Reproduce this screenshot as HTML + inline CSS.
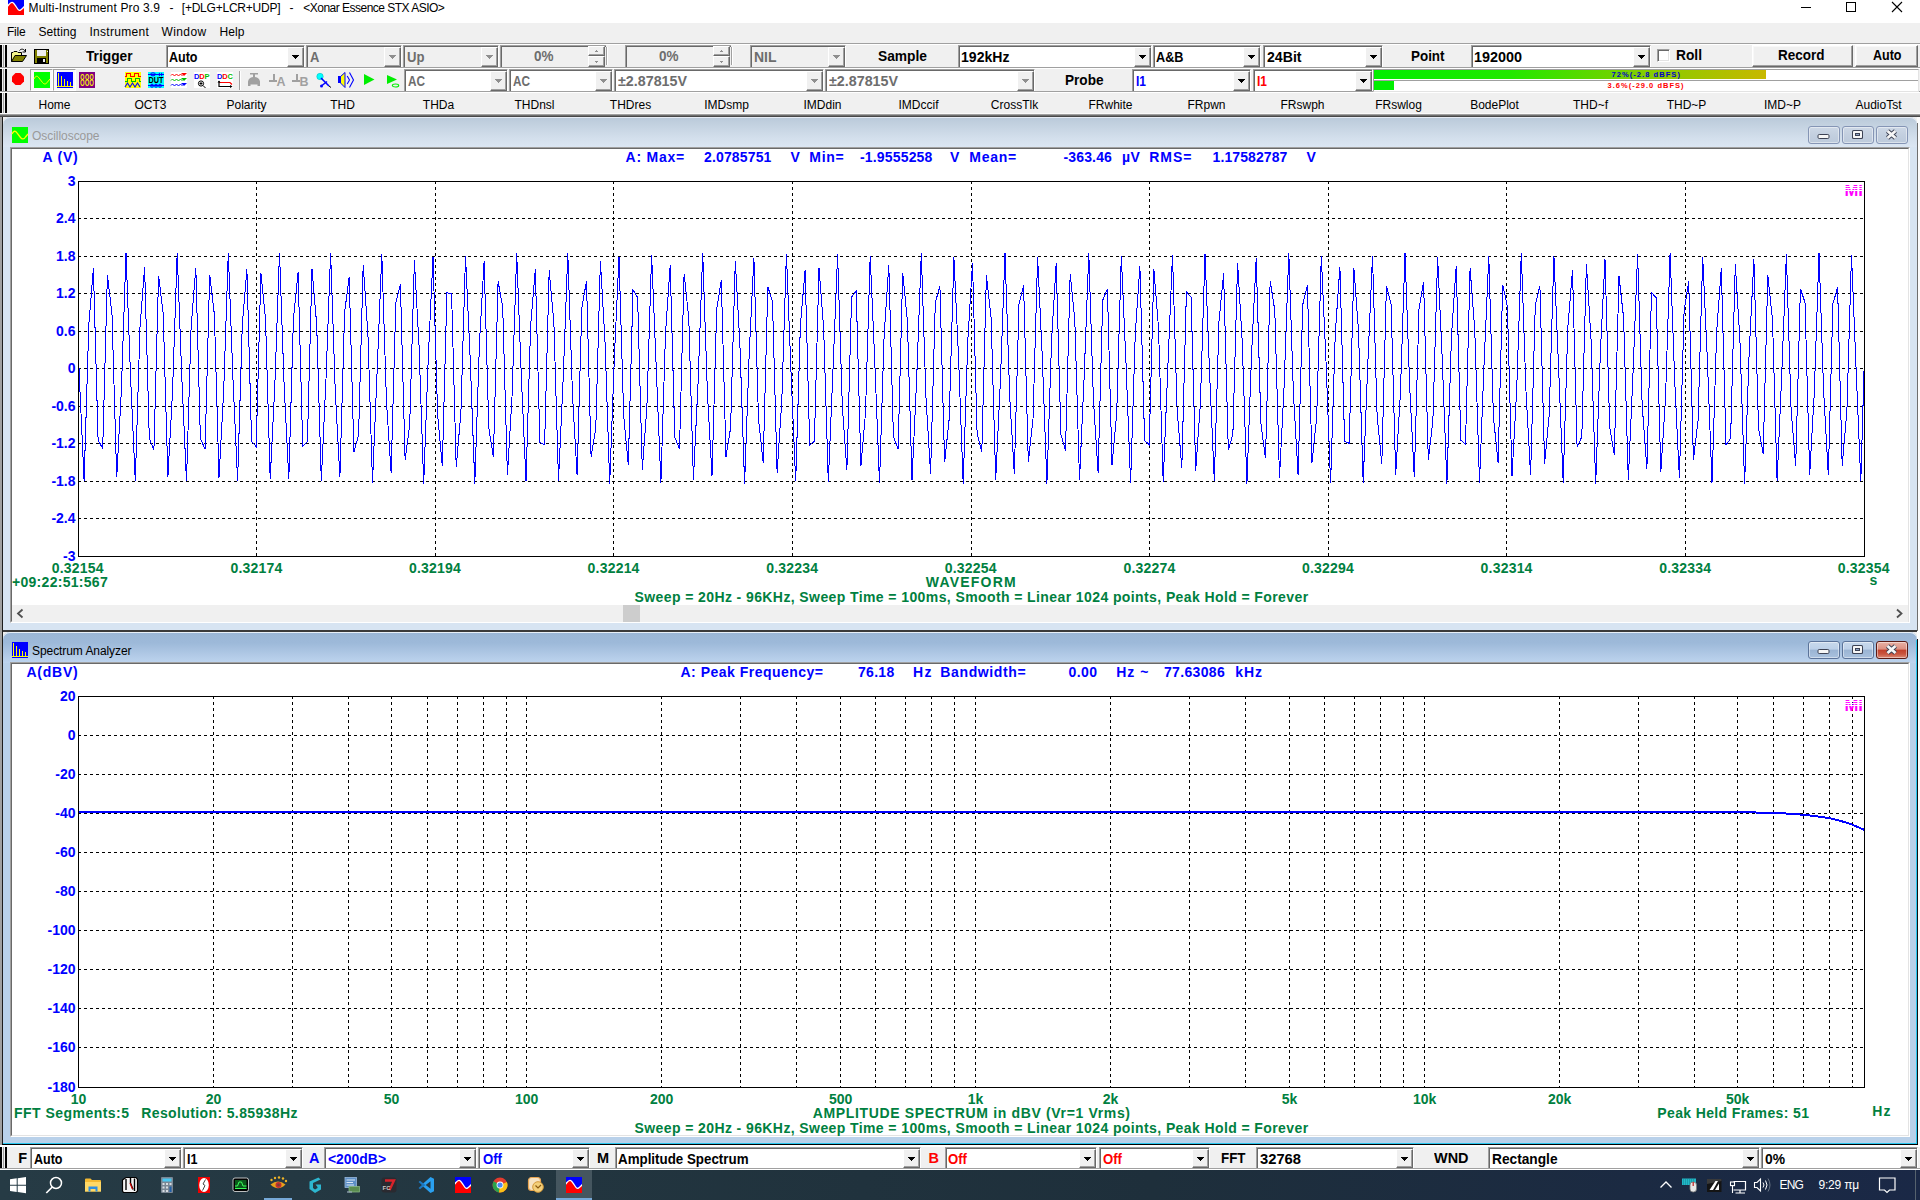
<!DOCTYPE html>
<html lang="en"><head><meta charset="utf-8"><title>Multi-Instrument Pro 3.9</title>
<style>
html,body{margin:0;padding:0;}
body{width:1920px;height:1200px;position:relative;overflow:hidden;background:#f0f0f0;font-family:"Liberation Sans",sans-serif;}
.a{position:absolute;box-sizing:border-box;}
.t{position:absolute;white-space:pre;}
svg{position:absolute;overflow:visible;}
.cb{position:absolute;box-sizing:border-box;border:solid;border-width:1px 1px 0 1px;border-color:#a0a0a0 #fff #fff #a0a0a0;}
.cb>i{position:absolute;box-sizing:border-box;left:0;top:0;right:0;bottom:0;border:solid #696969;border-width:1px 0 0 1px;display:block;}
.ab{position:absolute;box-sizing:border-box;background:#f0f0f0;border:1px solid;border-color:#fff #696969 #696969 #fff;box-shadow:inset -1px -1px 0 #a0a0a0;}
.ab>b{position:absolute;left:4px;top:7px;width:7px;height:4px;--c:#000;background:linear-gradient(var(--c),var(--c)) 0 0/7px 1px no-repeat,linear-gradient(var(--c),var(--c)) 1px 1px/5px 1px no-repeat,linear-gradient(var(--c),var(--c)) 2px 2px/3px 1px no-repeat,linear-gradient(var(--c),var(--c)) 3px 3px/1px 1px no-repeat;}
.ab.d>b{--c:#8f8f8f;}
.ab>u{position:absolute;left:6px;width:3px;height:2px;--c:#8f8f8f;}
.ab>u.up{top:3px;background:linear-gradient(var(--c),var(--c)) 1px 0/1px 1px no-repeat,linear-gradient(var(--c),var(--c)) 0 1px/3px 1px no-repeat;}
.ab>u.dn{top:4px;background:linear-gradient(var(--c),var(--c)) 0 0/3px 1px no-repeat,linear-gradient(var(--c),var(--c)) 1px 1px/1px 1px no-repeat;}
.btn{position:absolute;box-sizing:border-box;background:#f0f0f0;border:1px solid;border-color:#fff #696969 #696969 #fff;box-shadow:inset -1px -1px 0 #a0a0a0, inset 1px 1px 0 #f8f8f8;}
.grip{position:absolute;width:7px;background:linear-gradient(90deg,#000 0,#000 2px,#f0f0f0 2px,#f0f0f0 3px,#a0a0a0 3px,#a0a0a0 4px,#f0f0f0 4px,#f0f0f0 5px,#000 5px,#000 7px);}
.hl{position:absolute;left:0;width:1920px;height:2px;background:linear-gradient(180deg,#a0a0a0 0,#a0a0a0 1px,#fff 1px,#fff 2px);}
</style></head><body>
<div class="a" style="left:0px;top:0px;width:1920px;height:23px;background:#fff;"></div><svg style="left:8px;top:-1px;overflow:hidden" width="16" height="16" viewBox="0 0 16 16" shape-rendering="crispEdges"><rect width="16" height="16" fill="#0000ff"/><path d="M-1 8 L0.500 6 C2 4.200 3 3.300 4 3.300 C5.500 3.300 6.500 5 8 7.500 C9.500 10 10.500 11.400 11.500 11.400 C13 11.400 14.500 9.500 17 7 V17 H-1Z" fill="#ff0000" stroke="#fff" stroke-width="1.300" shape-rendering="auto"/><rect x="0" y="15" width="16" height="1" fill="#ff0000"/></svg><span class="t " style="left:28.60px;top:1.84px;font-size:12px;line-height:12px;color:#000;letter-spacing:0.144px;">Multi-Instrument Pro 3.9</span><span class="t " style="left:169.50px;top:1.84px;font-size:12px;line-height:12px;color:#000;">-</span><span class="t " style="left:181.80px;top:1.84px;font-size:12px;line-height:12px;color:#000;letter-spacing:-0.229px;">[+DLG+LCR+UDP]</span><span class="t " style="left:289.50px;top:1.84px;font-size:12px;line-height:12px;color:#000;">-</span><span class="t " style="left:303.30px;top:1.84px;font-size:12px;line-height:12px;color:#000;letter-spacing:-0.517px;">&lt;Xonar Essence STX ASIO&gt;</span><svg style="left:1790px;top:0" width="130" height="22" viewBox="0 0 130 22" shape-rendering="crispEdges"><rect x="11" y="7" width="10" height="1" fill="#000"/><rect x="56.5" y="2.5" width="9" height="9" fill="none" stroke="#000" stroke-width="1"/><path d="M102 2 L112 12 M112 2 L102 12" stroke="#000" stroke-width="1.1" shape-rendering="auto"/></svg><div class="a" style="left:0px;top:23px;width:1920px;height:20px;background:#f0f0f0;"></div><span class="t " style="left:7.00px;top:25.84px;font-size:12px;line-height:12px;color:#000;letter-spacing:-0.209px;">File</span><span class="t " style="left:38.50px;top:25.84px;font-size:12px;line-height:12px;color:#000;letter-spacing:0.092px;">Setting</span><span class="t " style="left:89.50px;top:25.84px;font-size:12px;line-height:12px;color:#000;letter-spacing:0.281px;">Instrument</span><span class="t " style="left:161.50px;top:25.84px;font-size:12px;line-height:12px;color:#000;letter-spacing:0.387px;">Window</span><span class="t " style="left:219.50px;top:25.84px;font-size:12px;line-height:12px;color:#000;letter-spacing:0.080px;">Help</span><div class="hl" style="top:43px"></div><div class="hl" style="top:67px"></div><div class="hl" style="top:91px"></div><div class="grip" style="left:0;top:45px;height:22px"></div><div class="grip" style="left:0;top:69px;height:22px"></div><div class="grip" style="left:0;top:93px;height:21px"></div><svg style="left:11px;top:48px" width="16" height="16" viewBox="0 0 16 16"><path d="M8.5 2.5 C10 0.5 13 0.8 14 3.2 M14.5 1 V4 H11.5" fill="none" stroke="#000" stroke-width="1"/><path d="M0.5 13.5 V4.5 H2 L3 3.5 H6 L7 4.5 H10.5 V7.5" fill="#f4f48a" stroke="#000" stroke-width="1"/><path d="M0.5 13.5 L4 7.5 H15.5 L11.5 13.5 Z" fill="#808000" stroke="#000" stroke-width="1"/></svg><svg style="left:34px;top:49px" width="15" height="15" viewBox="0 0 15 15" shape-rendering="crispEdges"><rect x="0.5" y="0.5" width="14" height="14" fill="#808000" stroke="#000"/><rect x="3" y="1" width="9" height="6" fill="#f0f0f0"/><rect x="3" y="9" width="9" height="5" fill="#000"/><rect x="9" y="10" width="2" height="3" fill="#f0f0f0"/><rect x="12.5" y="1.5" width="1" height="1" fill="#f0f0f0"/></svg><span class="t " style="left:86.00px;top:49.15px;font-size:14px;line-height:14px;color:#000;transform:scaleX(0.9799);transform-origin:0 0;font-weight:bold;">Trigger</span><div class="cb" style="left:166px;top:45px;width:139px;height:22px;background:#fff;"><i></i><div class="ab" style="right:0;top:1px;width:17px;height:20px;"><b></b></div></div><span class="t " style="left:169.30px;top:50.15px;font-size:14px;line-height:14px;color:#000;transform:scaleX(0.8941);transform-origin:0 0;font-weight:bold;">Auto</span><div class="cb" style="left:306px;top:45px;width:96px;height:22px;background:#f0f0f0;"><i></i><div class="ab d" style="right:0;top:1px;width:17px;height:20px;"><b></b></div></div><span class="t " style="left:310.00px;top:50.15px;font-size:14px;line-height:14px;color:#6d6d6d;transform:scaleX(0.9286);transform-origin:0 0;font-weight:bold;">A</span><div class="cb" style="left:403px;top:45px;width:96px;height:22px;background:#f0f0f0;"><i></i><div class="ab d" style="right:0;top:1px;width:17px;height:20px;"><b></b></div></div><span class="t " style="left:407.00px;top:50.15px;font-size:14px;line-height:14px;color:#6d6d6d;transform:scaleX(0.9378);transform-origin:0 0;font-weight:bold;">Up</span><div class="cb" style="left:500px;top:45px;width:106px;height:22px;background:#f0f0f0;border-right:none"><i></i><div class="ab d" style="right:1px;top:0;width:17px;height:10px;"><u class="up"></u></div><div class="ab d" style="right:1px;top:10px;width:17px;height:11px;"><u class="dn"></u></div></div><span class="t " style="left:534.30px;top:48.65px;font-size:14px;line-height:14px;color:#6d6d6d;transform:scaleX(0.9637);transform-origin:0 0;font-weight:bold;">0%</span><div class="cb" style="left:625px;top:45px;width:106px;height:22px;background:#f0f0f0;border-right:none"><i></i><div class="ab d" style="right:1px;top:0;width:17px;height:10px;"><u class="up"></u></div><div class="ab d" style="right:1px;top:10px;width:17px;height:11px;"><u class="dn"></u></div></div><span class="t " style="left:659.00px;top:48.65px;font-size:14px;line-height:14px;color:#6d6d6d;transform:scaleX(0.9637);transform-origin:0 0;font-weight:bold;">0%</span><div class="a" style="left:606px;top:47px;width:2px;height:18px;background:linear-gradient(90deg,#a0a0a0 0,#a0a0a0 1px,#fff 1px);"></div><div class="a" style="left:731px;top:47px;width:2px;height:18px;background:linear-gradient(90deg,#a0a0a0 0,#a0a0a0 1px,#fff 1px);"></div><div class="cb" style="left:750px;top:45px;width:96px;height:22px;background:#f0f0f0;"><i></i><div class="ab d" style="right:0;top:1px;width:17px;height:20px;"><b></b></div></div><span class="t " style="left:754.00px;top:50.15px;font-size:14px;line-height:14px;color:#6d6d6d;transform:scaleX(0.9977);transform-origin:0 0;font-weight:bold;">NIL</span><span class="t " style="left:878.00px;top:49.15px;font-size:14px;line-height:14px;color:#000;transform:scaleX(0.9840);transform-origin:0 0;font-weight:bold;">Sample</span><div class="cb" style="left:958px;top:45px;width:194px;height:22px;background:#fff;"><i></i><div class="ab" style="right:0;top:1px;width:17px;height:20px;"><b></b></div></div><span class="t " style="left:961.00px;top:50.15px;font-size:14px;line-height:14px;color:#000;transform:scaleX(1.0051);transform-origin:0 0;font-weight:bold;">192kHz</span><div class="cb" style="left:1153px;top:45px;width:108px;height:22px;background:#fff;"><i></i><div class="ab" style="right:0;top:1px;width:17px;height:20px;"><b></b></div></div><span class="t " style="left:1156.30px;top:50.15px;font-size:14px;line-height:14px;color:#000;transform:scaleX(0.9066);transform-origin:0 0;font-weight:bold;">A&amp;B</span><div class="cb" style="left:1263px;top:45px;width:120px;height:22px;background:#fff;"><i></i><div class="ab" style="right:0;top:1px;width:17px;height:20px;"><b></b></div></div><span class="t " style="left:1267.00px;top:50.15px;font-size:14px;line-height:14px;color:#000;transform:scaleX(1.0078);transform-origin:0 0;font-weight:bold;">24Bit</span><span class="t " style="left:1411.00px;top:49.15px;font-size:14px;line-height:14px;color:#000;transform:scaleX(0.9574);transform-origin:0 0;font-weight:bold;">Point</span><div class="cb" style="left:1471px;top:45px;width:180px;height:22px;background:#fff;"><i></i><div class="ab" style="right:0;top:1px;width:17px;height:20px;"><b></b></div></div><span class="t " style="left:1474.30px;top:50.15px;font-size:14px;line-height:14px;color:#000;transform:scaleX(1.0276);transform-origin:0 0;font-weight:bold;">192000</span><div class="a" style="left:1657px;top:49px;width:13px;height:13px;background:#fff;border:1px solid;border-color:#a0a0a0 #fff #fff #a0a0a0;box-shadow:inset 1px 1px 0 #696969, inset -1px -1px 0 #e3e3e3;"></div><span class="t " style="left:1676.00px;top:48.15px;font-size:14px;line-height:14px;color:#000;transform:scaleX(0.9833);transform-origin:0 0;font-weight:bold;">Roll</span><div class="btn" style="left:1752px;top:45px;width:101px;height:22px"></div><span class="t " style="left:1778.30px;top:48.15px;font-size:14px;line-height:14px;color:#000;transform:scaleX(0.9641);transform-origin:0 0;font-weight:bold;">Record</span><div class="btn" style="left:1855px;top:45px;width:63px;height:22px"></div><span class="t " style="left:1873.30px;top:48.15px;font-size:14px;line-height:14px;color:#000;transform:scaleX(0.8941);transform-origin:0 0;font-weight:bold;">Auto</span><svg style="left:12px;top:73px" width="12" height="12" viewBox="0 0 12 12"><path d="M3.5 0 H8.5 L12 3.5 V8.5 L8.5 12 H3.5 L0 8.5 V3.5Z" fill="#ff0000"/></svg><div class="a" style="left:30px;top:69px;width:23px;height:22px;background:#f8f8f8;border:1px solid;border-color:#a0a0a0 #fff #fff #a0a0a0;"></div><div class="a" style="left:53px;top:69px;width:23px;height:22px;background:#f8f8f8;border:1px solid;border-color:#a0a0a0 #fff #fff #a0a0a0;"></div><svg style="left:34px;top:72px" width="16" height="16" viewBox="0 0 16 16"><rect width="16" height="16" fill="#00ff00"/><path d="M0 7 C1.5 3.5 3.5 3.5 5 6 L8.5 10.5 C10 12.5 12 12.5 13.5 10 L16 7" fill="none" stroke="#ffff00" stroke-width="1"/></svg><svg style="left:57px;top:72px" width="16" height="16" viewBox="0 0 16 16" shape-rendering="crispEdges"><rect width="16" height="16" fill="#0000ff"/><g fill="#ffff00"><rect x="0" y="14" width="16" height="1"/><rect x="1" y="1" width="1" height="13"/><rect x="4" y="4" width="1" height="10"/><rect x="7" y="7" width="1" height="7"/><rect x="10" y="9" width="1" height="5"/><rect x="13" y="10" width="1" height="4"/></g></svg><svg style="left:79px;top:72px" width="16" height="16" viewBox="0 0 16 16"><rect width="16" height="16" fill="#800080"/><text x="1" y="14" font-family="Liberation Sans,sans-serif" font-size="16.500" fill="#ffff00" textLength="14" lengthAdjust="spacingAndGlyphs">888</text></svg><svg style="left:125px;top:72px" width="16" height="16" viewBox="0 0 16 16"><rect width="16" height="16" fill="#ffff00"/><path d="M0 4.5 H1.5 V1.5 H5.5 V4.5 H9.5 V1.5 H13.5 V4.5 H16" fill="none" stroke="#ff0000" stroke-width="1" shape-rendering="crispEdges"/><path d="M0 9.5 H2.5 V6.5 H6.5 V9.5 H10.5 V6.5 H14.5 V9.5 H16" fill="none" stroke="#00c000" stroke-width="1" shape-rendering="crispEdges"/><path d="M0 15 L2.5 11 L5 15 L7.5 11 L10 15 L12.5 11 L15 15" fill="none" stroke="#0000ff" stroke-width="1.1"/></svg><svg style="left:148px;top:72px" width="16" height="16" viewBox="0 0 16 16"><rect width="16" height="16" fill="#00ffff"/><path d="M0 2.5 H16 M0 13.5 H16" stroke="#0000ff" stroke-width="1"/><ellipse cx="5" cy="2.3" rx="2.4" ry="1.5" fill="none" stroke="#0000ff"/><path d="M10 2.5 l2 -2 v4z M15 2.5 l-2 -2 v4z" fill="#0000ff"/><circle cx="4" cy="13.7" r="1.5" fill="none" stroke="#0000ff"/><circle cx="8" cy="13.7" r="1.5" fill="none" stroke="#0000ff"/><circle cx="12" cy="13.7" r="1.5" fill="none" stroke="#0000ff"/><text x="8" y="11" font-family="Liberation Sans,sans-serif" font-weight="bold" font-size="8.5" fill="#000" text-anchor="middle" textLength="15" lengthAdjust="spacingAndGlyphs">DUT</text></svg><svg style="left:171px;top:72px" width="16" height="16" viewBox="0 0 16 16"><rect width="16" height="16" fill="#fff"/><g fill="none" stroke-width="1"><path d="M0 3.5 l1.5 -1.5 l2 2 l2 -2 l2 2 l2 -2 l2 2" stroke="#ff0000"/><path d="M0 8.5 l1.5 -1.5 l2 2 l2 -2 l2 2 l2 -2 l2 2" stroke="#00c000"/><path d="M0 13.5 l1.5 -1.5 l2 2 l2 -2 l2 2 l2 -2 l2 2" stroke="#0000ff"/></g><path d="M10 1 h6 l-3 3z" fill="#ff0000"/><path d="M10 6 h6 l-3 3z" fill="#00c000"/><path d="M10 11 h6 l-3 3z" fill="#0000ff"/></svg><svg style="left:194px;top:72px" width="16" height="16" viewBox="0 0 16 16"><rect width="16" height="16" fill="#fff"/><g font-family="Liberation Sans,sans-serif" font-weight="bold" font-size="7.5"><text x="0" y="7" fill="#0000ff">D</text><text x="5.3" y="7" fill="#ff0000">D</text><text x="10.6" y="7" fill="#00c000">P</text></g><circle cx="7" cy="11.5" r="2.6" fill="none" stroke="#000"/><path d="M5.5 11.5 h3 M7 10 v3 M9 13.5 l2.5 2.5" stroke="#000" fill="none"/></svg><svg style="left:217px;top:72px" width="16" height="16" viewBox="0 0 16 16"><rect width="16" height="16" fill="#fff"/><g font-family="Liberation Sans,sans-serif" font-weight="bold" font-size="7.5"><text x="0" y="7" fill="#0000ff">D</text><text x="5.3" y="7" fill="#ff0000">D</text><text x="10.6" y="7" fill="#00c000">C</text></g><path d="M2 10.5 H13 L15 12.5" fill="none" stroke="#ff0000" stroke-width="1.2"/><path d="M2 9 V14.5 H14" fill="none" stroke="#000" stroke-width="1.2"/><path d="M0.5 10.5 l1.5 -2 l1.5 2z M13 13 l2.5 1.5 l-2.5 1.5z" fill="#000"/></svg><div class="a" style="left:239px;top:71px;width:2px;height:19px;background:linear-gradient(90deg,#a0a0a0 0,#a0a0a0 1px,#fff 1px);"></div><svg style="left:247px;top:72px" width="14" height="16" viewBox="0 0 14 16"><path d="M3 1 h8 v1.5 h-3 v2.5 c3 0.5 4.5 2 5 4.5 v4.5 h-2.5 v-1.5 h-7 v1.5 h-2.5 v-4.5 c0.5 -2.500 2 -4 5 -4.5 v-2.5 h-3z" fill="#a0a0a0"/></svg><svg style="left:269px;top:72px" width="17" height="16" viewBox="0 0 17 16"><path d="M4.500 1.500 V9 M0 9 H8" stroke="#a0a0a0" stroke-width="2" fill="none" shape-rendering="crispEdges"/><text x="7.500" y="14" font-family="Liberation Sans,sans-serif" font-size="13" font-weight="bold" fill="#a0a0a0" textLength="9" lengthAdjust="spacingAndGlyphs">A</text></svg><svg style="left:292px;top:72px" width="17" height="16" viewBox="0 0 17 16"><path d="M4.500 1.500 V9 M0 9 H8" stroke="#a0a0a0" stroke-width="2" fill="none" shape-rendering="crispEdges"/><text x="7.500" y="14" font-family="Liberation Sans,sans-serif" font-size="13" font-weight="bold" fill="#a0a0a0" textLength="9" lengthAdjust="spacingAndGlyphs">B</text></svg><svg style="left:316px;top:72px" width="16" height="16" viewBox="0 0 16 16"><circle cx="4" cy="4.500" r="3.2" fill="#00ffff" stroke="#00c0c0" stroke-width="0.6"/><path d="M5 6 L13 14 M11 9.500 L6 13.500" stroke="#0000ff" stroke-width="1.6" fill="none"/><circle cx="5.500" cy="14" r="1.500" fill="#0000ff"/><path d="M13 14 l2 1.500" stroke="#000" stroke-width="1"/></svg><svg style="left:338px;top:71px" width="17" height="18" viewBox="0 0 17 18"><path d="M2.500 5.500 L7 1.500 V16.500 L2.500 12Z" fill="#ffff00" stroke="#0000ff" stroke-width="1"/><rect x="0" y="5" width="2.800" height="7" fill="#0000ff"/><path d="M9.200 5 L11.500 9 L9.200 13 M11.500 1.500 L15.500 9 L11.500 16.500" fill="none" stroke="#0000ff" stroke-width="1.100"/></svg><svg style="left:364px;top:74px" width="11" height="11" viewBox="0 0 11 11"><path d="M0 0 L10.500 5.500 L0 11Z" fill="#00ee00"/></svg><svg style="left:387px;top:75px" width="14" height="14" viewBox="0 0 14 14"><path d="M0 0 L10 4.500 L0 9Z" fill="#00ee00"/><ellipse cx="8.500" cy="10.500" rx="3.200" ry="1.500" fill="none" stroke="#00ee00" stroke-width="1.100"/></svg><div class="cb" style="left:404px;top:69px;width:104px;height:22px;background:#fff;"><i></i><div class="ab d" style="right:0;top:1px;width:17px;height:20px;"><b></b></div></div><span class="t " style="left:408.00px;top:74.15px;font-size:14px;line-height:14px;color:#6d6d6d;transform:scaleX(0.8407);transform-origin:0 0;font-weight:bold;">AC</span><div class="cb" style="left:509px;top:69px;width:104px;height:22px;background:#fff;"><i></i><div class="ab d" style="right:0;top:1px;width:17px;height:20px;"><b></b></div></div><span class="t " style="left:513.00px;top:74.15px;font-size:14px;line-height:14px;color:#6d6d6d;transform:scaleX(0.8407);transform-origin:0 0;font-weight:bold;">AC</span><div class="cb" style="left:614px;top:69px;width:210px;height:22px;background:#fff;"><i></i><div class="ab d" style="right:0;top:1px;width:17px;height:20px;"><b></b></div></div><span class="t " style="left:618.00px;top:74.15px;font-size:14px;line-height:14px;color:#6d6d6d;transform:scaleX(1.0203);transform-origin:0 0;font-weight:bold;">±2.87815V</span><div class="cb" style="left:825px;top:69px;width:210px;height:22px;background:#fff;"><i></i><div class="ab d" style="right:0;top:1px;width:17px;height:20px;"><b></b></div></div><span class="t " style="left:829.00px;top:74.15px;font-size:14px;line-height:14px;color:#6d6d6d;transform:scaleX(1.0203);transform-origin:0 0;font-weight:bold;">±2.87815V</span><span class="t " style="left:1065.00px;top:73.15px;font-size:14px;line-height:14px;color:#000;transform:scaleX(0.9704);transform-origin:0 0;font-weight:bold;">Probe</span><div class="cb" style="left:1132px;top:69px;width:119px;height:22px;background:#fff;"><i></i><div class="ab" style="right:0;top:1px;width:17px;height:20px;"><b></b></div></div><span class="t " style="left:1136.00px;top:74.15px;font-size:14px;line-height:14px;color:#0000ff;transform:scaleX(0.8566);transform-origin:0 0;font-weight:bold;">I1</span><div class="cb" style="left:1253px;top:69px;width:120px;height:22px;background:#fff;"><i></i><div class="ab" style="right:0;top:1px;width:17px;height:20px;"><b></b></div></div><span class="t " style="left:1257.00px;top:74.15px;font-size:14px;line-height:14px;color:#ff0000;transform:scaleX(0.8566);transform-origin:0 0;font-weight:bold;">I1</span><div class="a" style="left:1373px;top:69px;width:546px;height:23px;background:#fff;border:1px solid;border-color:#a0a0a0 #e3e3e3 #e3e3e3 #a0a0a0;"></div><div class="a" style="left:1374px;top:70px;width:392px;height:9px;background:linear-gradient(90deg,#00ee00 0%,#22e800 35%,#7ad000 65%,#c8b800 100%);"></div><div class="a" style="left:1374px;top:80px;width:544px;height:1px;background:#a0a0a0;"></div><div class="a" style="left:1374px;top:81px;width:20px;height:9px;background:#00ee00;"></div><span class="t " style="left:1611.50px;top:71.25px;font-size:7.5px;line-height:7.5px;color:#0000c8;letter-spacing:1.065px;font-weight:bold;">72%(-2.8 dBFS)</span><span class="t " style="left:1607.50px;top:82.05px;font-size:7.5px;line-height:7.5px;color:#ff0000;letter-spacing:1.010px;font-weight:bold;">3.6%(-29.0 dBFS)</span><span class="t " style="left:38.50px;top:98.84px;font-size:12px;line-height:12px;color:#000;">Home</span><span class="t " style="left:134.50px;top:98.84px;font-size:12px;line-height:12px;color:#000;">OCT3</span><span class="t " style="left:226.49px;top:98.84px;font-size:12px;line-height:12px;color:#000;">Polarity</span><span class="t " style="left:330.17px;top:98.84px;font-size:12px;line-height:12px;color:#000;">THD</span><span class="t " style="left:422.83px;top:98.84px;font-size:12px;line-height:12px;color:#000;">THDa</span><span class="t " style="left:514.50px;top:98.84px;font-size:12px;line-height:12px;color:#000;">THDnsl</span><span class="t " style="left:609.83px;top:98.84px;font-size:12px;line-height:12px;color:#000;">THDres</span><span class="t " style="left:704.17px;top:98.84px;font-size:12px;line-height:12px;color:#000;">IMDsmp</span><span class="t " style="left:803.50px;top:98.84px;font-size:12px;line-height:12px;color:#000;">IMDdin</span><span class="t " style="left:898.50px;top:98.84px;font-size:12px;line-height:12px;color:#000;">IMDccif</span><span class="t " style="left:990.83px;top:98.84px;font-size:12px;line-height:12px;color:#000;">CrossTlk</span><span class="t " style="left:1088.50px;top:98.84px;font-size:12px;line-height:12px;color:#000;">FRwhite</span><span class="t " style="left:1187.50px;top:98.84px;font-size:12px;line-height:12px;color:#000;">FRpwn</span><span class="t " style="left:1280.50px;top:98.84px;font-size:12px;line-height:12px;color:#000;">FRswph</span><span class="t " style="left:1375.16px;top:98.84px;font-size:12px;line-height:12px;color:#000;">FRswlog</span><span class="t " style="left:1470.15px;top:98.84px;font-size:12px;line-height:12px;color:#000;">BodePlot</span><span class="t " style="left:1573.00px;top:98.84px;font-size:12px;line-height:12px;color:#000;">THD~f</span><span class="t " style="left:1666.66px;top:98.84px;font-size:12px;line-height:12px;color:#000;">THD~P</span><span class="t " style="left:1764.00px;top:98.84px;font-size:12px;line-height:12px;color:#000;">IMD~P</span><span class="t " style="left:1855.49px;top:98.84px;font-size:12px;line-height:12px;color:#000;">AudioTst</span><div class="a" style="left:0px;top:113px;width:1920px;height:4px;background:linear-gradient(180deg,#fafafa 0,#fafafa 1px,#a0a0a0 1px,#a0a0a0 2px,#6e6e6e 2px,#6e6e6e 3px,#484848 3px);"></div><div class="a" style="left:0px;top:117px;width:3px;height:1028px;background:linear-gradient(90deg,#a0a0a0 0,#a0a0a0 2px,#1c1c1c 2px);"></div><div class="a" style="left:1917px;top:117px;width:3px;height:1028px;background:#fcfcfc;"></div><div class="a" style="left:1917px;top:123px;width:1px;height:508px;background:#6e6e6e;"></div><div class="a" style="left:1917px;top:639px;width:1px;height:506px;background:#101010;"></div><div class="a" style="left:3px;top:117px;width:1914px;height:513px;background:#d7e4f2;border-radius:7px 7px 0 0;"></div><div class="a" style="left:3px;top:117px;width:1914px;height:30px;background:linear-gradient(180deg,#b9c9da 0,#bfcedd 15%,#d3dfec 70%,#dbe6f3 100%);border-radius:7px 7px 0 0;box-shadow:inset 0 1px 0 #e6ecf5;"></div><div class="a" style="left:3px;top:630px;width:1914px;height:2px;background:#3a3a3a;"></div><svg style="left:12px;top:127px" width="16" height="16" viewBox="0 0 16 16"><rect width="16" height="16" fill="#00ff00"/><path d="M0 7 C1.500 3.500 3.500 3.500 5 6 L8.500 10.500 C10 12.500 12 12.500 13.500 10 L16 7" fill="none" stroke="#ffff00" stroke-width="1.300"/></svg><span class="t " style="left:32.00px;top:129.84px;font-size:12px;line-height:12px;color:#9a9a9a;letter-spacing:-0.044px;">Oscilloscope</span><div class="a" style="left:1808px;top:126px;width:32px;height:18px;border:1px solid #8595b5;border-radius:3px;background:linear-gradient(180deg,#cdd8e6 0,#c3cfdf 50%,#bccadb 100%);box-shadow:inset 0 0 0 1px rgba(255,255,255,.45);"></div><div class="a" style="left:1842px;top:126px;width:32px;height:18px;border:1px solid #8595b5;border-radius:3px;background:linear-gradient(180deg,#cdd8e6 0,#c3cfdf 50%,#bccadb 100%);box-shadow:inset 0 0 0 1px rgba(255,255,255,.45);"></div><div class="a" style="left:1876px;top:126px;width:32px;height:18px;border:1px solid #8595b5;border-radius:3px;background:linear-gradient(180deg,#cdd8e6 0,#c3cfdf 50%,#bccadb 100%);box-shadow:inset 0 0 0 1px rgba(255,255,255,.45);"></div><svg style="left:1808px;top:126px" width="100" height="18" viewBox="0 0 100 18"><rect x="10" y="8.500" width="11" height="4" rx="1.200" fill="#f6f6f6" stroke="#3c4254" stroke-width="1"/><rect x="44" y="4" width="11" height="9" rx="1.500" fill="#3c4254"/><rect x="45" y="5" width="9" height="7" rx="0.800" fill="#f6f6f6"/><rect x="47" y="7" width="5" height="3" fill="#3c4254"/><rect x="48" y="8" width="3" height="1" fill="#8fa3c4"/><path d="M79.500 5 L87.500 12 M87.500 5 L79.500 12" stroke="#3c4254" stroke-width="4.600" fill="none"/><path d="M79.500 5 L87.500 12 M87.500 5 L79.500 12" stroke="#f6f6f6" stroke-width="2.800" fill="none"/></svg><div class="a" style="left:10px;top:147px;width:1900px;height:476px;background:#fff;border:1px solid;border-color:#a0a0a0 #fff #fff #a0a0a0;"></div><div class="a" style="left:11px;top:148px;width:1898px;height:474px;border:1px solid;border-color:#696969 #e3e3e3 #e3e3e3 #696969;"></div><div class="a" style="left:12px;top:605px;width:1896px;height:17px;background:#f0f0f0;"></div><div class="a" style="left:623px;top:605px;width:17px;height:17px;background:#cdcdcd;"></div><svg style="left:12px;top:605px" width="1895" height="17" viewBox="0 0 1895 17"><path d="M10.500 4.500 L6 8.500 L10.500 12.500" fill="none" stroke="#505050" stroke-width="1.800"/><path d="M1885 4.500 L1889.500 8.500 L1885 12.500" fill="none" stroke="#505050" stroke-width="1.800"/></svg><svg style="left:0;top:0" width="1920" height="1200" viewBox="0 0 1920 1200" shape-rendering="crispEdges"><defs><clipPath id="oc"><rect x="78.500" y="182" width="1785.500" height="374"/></clipPath></defs><path d="M78 218.5 H1864 M78 256.5 H1864 M78 293.5 H1864 M78 331.5 H1864 M78 368.5 H1864 M78 406.5 H1864 M78 443.5 H1864 M78 481.5 H1864 M78 518.5 H1864 M256.5 181 V556 M435.5 181 V556 M613.5 181 V556 M792.5 181 V556 M971.5 181 V556 M1149.5 181 V556 M1328.5 181 V556 M1506.5 181 V556 M1685.5 181 V556" stroke="#000" stroke-width="1" stroke-dasharray="3 3" fill="none"/><polyline points="74.8,252.9 79.5,380.8 84.1,480.6 88.8,325.0 93.4,268.5 98.1,439.9 102.7,448.6 107.4,274.7 112.0,314.7 116.7,477.4 121.3,391.7 126.0,253.1 130.6,377.8 135.3,481.3 140.0,327.4 144.6,267.4 149.3,438.3 153.9,449.9 158.6,275.6 163.2,313.6 167.9,477.0 172.5,392.5 177.2,253.1 181.8,377.5 186.5,481.3 191.1,327.2 195.8,267.6 200.4,438.8 205.1,449.2 209.7,274.9 214.4,314.8 219.0,477.6 223.7,390.7 228.3,253.0 233.0,379.8 237.6,480.7 242.3,324.5 246.9,269.1 251.6,441.4 256.2,446.6 260.9,272.7 265.5,318.4 270.2,478.9 274.8,386.2 279.5,252.9 284.1,384.8 288.8,479.3 293.4,319.5 298.1,272.2 302.7,446.0 307.4,441.9 312.0,269.3 316.7,324.5 321.3,480.8 326.0,379.1 330.6,253.1 335.3,392.3 339.9,476.8 344.6,312.3 349.2,277.0 353.9,452.1 358.6,434.9 363.2,264.9 367.9,333.3 372.5,482.7 377.2,369.3 381.8,254.1 386.5,402.3 391.1,472.7 395.8,303.2 400.4,284.1 405.1,459.5 409.7,425.2 414.4,260.3 419.0,344.8 423.7,484.0 428.3,357.0 433.0,256.6 437.6,414.3 442.3,466.4 446.9,292.6 451.6,293.9 456.2,467.3 460.9,412.6 465.5,256.1 470.2,359.1 474.8,483.8 479.5,342.3 484.1,261.3 488.8,428.0 493.4,457.2 498.1,281.4 502.7,306.9 507.4,474.8 512.0,397.0 516.7,253.4 521.3,376.0 526.0,481.3 530.6,325.6 535.3,269.2 539.9,442.6 544.6,444.5 549.2,270.5 553.9,323.3 558.5,480.7 563.2,378.2 567.8,253.2 572.5,395.3 577.1,475.3 581.8,307.8 586.5,281.0 591.1,457.0 595.8,427.9 600.4,261.1 605.1,343.4 609.7,483.9 614.4,356.7 619.0,256.8 623.7,416.0 628.3,464.9 633.0,290.0 637.6,297.3 642.3,469.9 646.9,407.0 651.6,254.7 656.2,366.7 660.9,482.9 665.5,333.3 670.2,265.5 674.8,437.1 679.5,449.2 684.1,273.7 688.8,318.6 693.4,479.5 698.1,382.2 702.7,253.0 707.4,392.5 712.0,476.2 716.7,309.3 721.3,280.3 726.0,456.7 730.6,427.8 735.3,260.8 739.9,344.6 744.6,484.0 749.2,354.3 753.9,257.7 758.5,419.3 763.2,462.5 767.8,286.6 772.5,301.6 777.1,472.6 781.8,400.9 786.4,253.7 791.1,374.3 795.7,481.4 800.4,325.0 805.1,270.1 809.7,444.8 814.4,441.4 819.0,267.8 823.7,329.3 828.3,482.3 833.0,369.5 837.6,254.4 842.3,405.9 846.9,470.0 851.6,296.9 856.2,291.1 860.9,466.2 865.5,412.9 870.2,255.8 874.8,362.3 879.5,483.3 884.1,335.7 888.8,264.8 893.4,436.5 898.1,449.1 902.7,273.1 907.4,320.5 912.0,480.3 916.7,378.3 921.3,253.3 926.0,398.1 930.6,473.6 935.3,302.9 939.9,285.9 944.6,462.4 949.2,418.8 953.9,257.3 958.5,356.5 963.2,483.8 967.8,340.7 972.5,262.8 977.1,432.9 981.8,451.9 986.4,275.2 991.1,317.4 995.7,479.5 1000.4,381.1 1005.0,253.1 1009.7,396.1 1014.3,474.3 1019.0,304.1 1023.6,285.2 1028.3,462.0 1033.0,419.1 1037.6,257.3 1042.3,356.8 1046.9,483.8 1051.6,339.7 1056.2,263.3 1060.9,434.2 1065.5,450.6 1070.2,273.9 1074.8,319.8 1079.5,480.3 1084.1,377.8 1088.8,253.4 1093.4,399.9 1098.1,472.5 1102.7,300.3 1107.4,288.7 1112.0,465.0 1116.7,414.0 1121.3,255.8 1126.0,363.1 1130.6,483.1 1135.3,333.0 1139.9,266.5 1144.6,440.4 1149.2,444.8 1153.9,269.4 1158.5,327.7 1163.2,482.2 1167.8,368.5 1172.5,254.7 1177.1,409.3 1181.8,467.6 1186.4,292.0 1191.1,297.0 1195.7,470.7 1200.4,403.2 1205.0,253.7 1209.7,375.3 1214.3,480.8 1219.0,321.1 1223.6,273.4 1228.3,450.4 1232.9,433.9 1237.6,262.9 1242.2,341.5 1246.9,484.0 1251.6,353.5 1256.2,258.5 1260.9,423.6 1265.5,458.4 1270.2,280.6 1274.8,310.7 1279.5,477.5 1284.1,386.4 1288.8,252.9 1293.4,393.0 1298.1,475.1 1302.7,304.8 1307.4,285.3 1312.0,462.7 1316.7,417.0 1321.3,256.4 1326.0,361.4 1330.6,483.2 1335.3,333.3 1339.9,266.8 1344.6,441.3 1349.2,443.3 1353.9,268.0 1358.5,331.0 1363.2,482.9 1367.8,363.5 1372.5,255.9 1377.1,415.4 1381.8,463.6 1386.4,286.2 1391.1,304.1 1395.7,474.8 1400.4,393.2 1405.0,252.9 1409.7,387.0 1414.3,477.2 1419.0,309.3 1423.6,282.0 1428.3,460.1 1432.9,420.6 1437.6,257.3 1442.2,358.2 1446.9,483.5 1451.5,335.5 1456.2,265.9 1460.8,440.2 1465.5,444.0 1470.1,268.3 1474.8,330.9 1479.5,483.0 1484.1,362.8 1488.8,256.2 1493.4,416.8 1498.1,462.5 1502.7,284.6 1507.4,306.4 1512.0,476.1 1516.7,389.7 1521.3,252.9 1526.0,391.4 1530.6,475.4 1535.3,304.9 1539.9,285.9 1544.6,463.7 1549.2,414.7 1553.9,255.6 1558.5,365.5 1563.2,482.5 1567.8,327.7 1572.5,270.1 1577.1,447.0 1581.8,436.7 1586.4,263.7 1591.1,340.6 1595.7,484.0 1600.4,351.8 1605.0,259.4 1609.7,427.3 1614.3,454.9 1619.0,276.4 1623.6,317.8 1628.3,480.3 1632.9,375.9 1637.6,253.9 1642.2,405.5 1646.9,468.8 1651.5,292.5 1656.2,297.8 1660.8,472.0 1665.5,398.9 1670.1,253.2 1674.8,383.0 1679.4,478.2 1684.1,311.2 1688.7,281.2 1693.4,459.9 1698.1,420.0 1702.7,256.9 1707.4,360.7 1712.0,483.2 1716.7,331.4 1721.3,268.4 1726.0,444.9 1730.6,438.5 1735.3,264.5 1739.9,339.4 1744.6,483.9 1749.2,352.1 1753.9,259.5 1758.5,427.9 1763.2,454.0 1767.8,275.3 1772.5,319.8 1777.1,480.9 1781.8,372.7 1786.4,254.4 1791.1,409.5 1795.7,466.3 1800.4,288.7 1805.0,302.4 1809.7,474.6 1814.3,392.4 1819.0,252.9 1823.6,390.6 1828.3,475.3 1832.9,303.8 1837.6,287.5 1842.2,465.5 1846.9,410.7 1851.5,254.6 1856.2,371.8 1860.8,481.1 1865.5,320.1 1870.1,275.3" fill="none" stroke="#0000ff" stroke-width="1" clip-path="url(#oc)"/><rect x="78.5" y="181.5" width="1786" height="375" fill="none" stroke="#000" stroke-width="1"/></svg><svg style="left:1845px;top:185px" width="18" height="11" viewBox="0 0 18 11"><text x="-0.500" y="11" font-family="Liberation Sans,sans-serif" font-weight="bold" font-size="16.400" fill="#ff00ff" textLength="18.500" lengthAdjust="spacingAndGlyphs">MI</text><path d="M0 -0.500 H19 M0 1.500 H19 M0 3.500 H19 M0 5.500 H19" stroke="#fff" stroke-width="1" shape-rendering="crispEdges"/></svg><span class="t " style="left:42.50px;top:150.15px;font-size:14px;line-height:14px;color:#0000ff;letter-spacing:0.771px;font-weight:bold;">A (V)</span><span class="t " style="left:67.71px;top:174.15px;font-size:14px;line-height:14px;color:#0000ff;font-weight:bold;">3</span><span class="t " style="left:56.04px;top:211.15px;font-size:14px;line-height:14px;color:#0000ff;font-weight:bold;">2.4</span><span class="t " style="left:56.04px;top:249.15px;font-size:14px;line-height:14px;color:#0000ff;font-weight:bold;">1.8</span><span class="t " style="left:56.04px;top:286.15px;font-size:14px;line-height:14px;color:#0000ff;font-weight:bold;">1.2</span><span class="t " style="left:56.04px;top:324.15px;font-size:14px;line-height:14px;color:#0000ff;font-weight:bold;">0.6</span><span class="t " style="left:67.71px;top:361.15px;font-size:14px;line-height:14px;color:#0000ff;font-weight:bold;">0</span><span class="t " style="left:51.38px;top:399.15px;font-size:14px;line-height:14px;color:#0000ff;font-weight:bold;">-0.6</span><span class="t " style="left:51.38px;top:436.15px;font-size:14px;line-height:14px;color:#0000ff;font-weight:bold;">-1.2</span><span class="t " style="left:51.38px;top:474.15px;font-size:14px;line-height:14px;color:#0000ff;font-weight:bold;">-1.8</span><span class="t " style="left:51.38px;top:511.15px;font-size:14px;line-height:14px;color:#0000ff;font-weight:bold;">-2.4</span><span class="t " style="left:63.05px;top:549.15px;font-size:14px;line-height:14px;color:#0000ff;font-weight:bold;">-3</span><span class="t " style="left:625.50px;top:150.15px;font-size:14px;line-height:14px;color:#0000ff;letter-spacing:0.776px;font-weight:bold;">A: Max=</span><span class="t " style="left:704.00px;top:150.15px;font-size:14px;line-height:14px;color:#0000ff;letter-spacing:0.148px;font-weight:bold;">2.0785751</span><span class="t " style="left:790.50px;top:150.15px;font-size:14px;line-height:14px;color:#0000ff;font-weight:bold;">V</span><span class="t " style="left:809.30px;top:150.15px;font-size:14px;line-height:14px;color:#0000ff;letter-spacing:0.680px;font-weight:bold;">Min=</span><span class="t " style="left:860.00px;top:150.15px;font-size:14px;line-height:14px;color:#0000ff;letter-spacing:0.167px;font-weight:bold;">-1.9555258</span><span class="t " style="left:950.00px;top:150.15px;font-size:14px;line-height:14px;color:#0000ff;font-weight:bold;">V</span><span class="t " style="left:969.30px;top:150.15px;font-size:14px;line-height:14px;color:#0000ff;letter-spacing:0.708px;font-weight:bold;">Mean=</span><span class="t " style="left:1063.50px;top:150.15px;font-size:14px;line-height:14px;color:#0000ff;letter-spacing:0.146px;font-weight:bold;">-363.46</span><span class="t " style="left:1122.00px;top:150.15px;font-size:14px;line-height:14px;color:#0000ff;letter-spacing:0.547px;font-weight:bold;">µV</span><span class="t " style="left:1149.30px;top:150.15px;font-size:14px;line-height:14px;color:#0000ff;letter-spacing:0.928px;font-weight:bold;">RMS=</span><span class="t " style="left:1212.50px;top:150.15px;font-size:14px;line-height:14px;color:#0000ff;letter-spacing:0.104px;font-weight:bold;">1.17582787</span><span class="t " style="left:1306.50px;top:150.15px;font-size:14px;line-height:14px;color:#0000ff;font-weight:bold;">V</span><span class="t " style="left:51.80px;top:561.15px;font-size:14px;line-height:14px;color:#008040;letter-spacing:0.200px;font-weight:bold;">0.32154</span><span class="t " style="left:230.40px;top:561.15px;font-size:14px;line-height:14px;color:#008040;letter-spacing:0.200px;font-weight:bold;">0.32174</span><span class="t " style="left:409.00px;top:561.15px;font-size:14px;line-height:14px;color:#008040;letter-spacing:0.200px;font-weight:bold;">0.32194</span><span class="t " style="left:587.60px;top:561.15px;font-size:14px;line-height:14px;color:#008040;letter-spacing:0.200px;font-weight:bold;">0.32214</span><span class="t " style="left:766.20px;top:561.15px;font-size:14px;line-height:14px;color:#008040;letter-spacing:0.200px;font-weight:bold;">0.32234</span><span class="t " style="left:944.80px;top:561.15px;font-size:14px;line-height:14px;color:#008040;letter-spacing:0.200px;font-weight:bold;">0.32254</span><span class="t " style="left:1123.40px;top:561.15px;font-size:14px;line-height:14px;color:#008040;letter-spacing:0.200px;font-weight:bold;">0.32274</span><span class="t " style="left:1302.00px;top:561.15px;font-size:14px;line-height:14px;color:#008040;letter-spacing:0.200px;font-weight:bold;">0.32294</span><span class="t " style="left:1480.60px;top:561.15px;font-size:14px;line-height:14px;color:#008040;letter-spacing:0.200px;font-weight:bold;">0.32314</span><span class="t " style="left:1659.20px;top:561.15px;font-size:14px;line-height:14px;color:#008040;letter-spacing:0.200px;font-weight:bold;">0.32334</span><span class="t " style="left:1837.80px;top:561.15px;font-size:14px;line-height:14px;color:#008040;letter-spacing:0.200px;font-weight:bold;">0.32354</span><span class="t " style="left:1869.50px;top:572.65px;font-size:14px;line-height:14px;color:#008040;font-weight:bold;">s</span><span class="t " style="left:12.00px;top:575.15px;font-size:14px;line-height:14px;color:#008040;letter-spacing:0.290px;font-weight:bold;">+09:22:51:567</span><span class="t " style="left:925.80px;top:575.15px;font-size:14px;line-height:14px;color:#008040;letter-spacing:1.200px;font-weight:bold;">WAVEFORM</span><span class="t " style="left:634.50px;top:590.15px;font-size:14px;line-height:14px;color:#008040;letter-spacing:0.403px;font-weight:bold;">Sweep = 20Hz - 96KHz, Sweep Time = 100ms, Smooth = Linear 1024 points, Peak Hold = Forever</span><div class="a" style="left:3px;top:632px;width:1914px;height:512px;background:#b9d1ea;border-radius:7px 7px 0 0;"></div><div class="a" style="left:3px;top:632px;width:1914px;height:31px;background:linear-gradient(180deg,#9ab6d6 0,#9db9d9 35%,#b4cce8 80%,#bdd4ee 100%);border-radius:7px 7px 0 0;box-shadow:inset 0 1px 0 #e8f0f8;"></div><div class="a" style="left:3px;top:1143px;width:1914px;height:1px;background:#28c8f0;"></div><div class="a" style="left:1916px;top:640px;width:1px;height:504px;background:#28c8f0;"></div><div class="a" style="left:2px;top:1144px;width:1916px;height:1px;background:#000;"></div><svg style="left:12px;top:642px" width="16" height="16" viewBox="0 0 16 16" shape-rendering="crispEdges"><rect width="16" height="16" fill="#0000ff"/><g fill="#ffff00"><rect x="0" y="14" width="16" height="1"/><rect x="1" y="1" width="1" height="13"/><rect x="4" y="4" width="1" height="10"/><rect x="7" y="7" width="1" height="7"/><rect x="10" y="9" width="1" height="5"/><rect x="13" y="10" width="1" height="4"/></g></svg><span class="t " style="left:32.00px;top:644.84px;font-size:12px;line-height:12px;color:#000;letter-spacing:-0.071px;">Spectrum Analyzer</span><div class="a" style="left:1808px;top:641px;width:32px;height:18px;border:1px solid #5b7399;border-radius:3px;background:linear-gradient(180deg,#c8d9ec 0,#bcd0e8 45%,#9ab4d3 50%,#a9c1de 100%);box-shadow:inset 0 0 0 1px rgba(255,255,255,.45);"></div><div class="a" style="left:1842px;top:641px;width:32px;height:18px;border:1px solid #5b7399;border-radius:3px;background:linear-gradient(180deg,#c8d9ec 0,#bcd0e8 45%,#9ab4d3 50%,#a9c1de 100%);box-shadow:inset 0 0 0 1px rgba(255,255,255,.45);"></div><div class="a" style="left:1876px;top:641px;width:32px;height:18px;border:1px solid #5a1a14;border-radius:3px;background:linear-gradient(180deg,#e9b2a5 0,#dc8f80 45%,#c2402b 50%,#c9553f 75%,#dc8a76 100%);box-shadow:inset 0 0 0 1px rgba(255,255,255,.45);"></div><svg style="left:1808px;top:641px" width="100" height="18" viewBox="0 0 100 18"><rect x="10" y="8.500" width="11" height="4" rx="1.200" fill="#f6f6f6" stroke="#3c4254" stroke-width="1"/><rect x="44" y="4" width="11" height="9" rx="1.500" fill="#3c4254"/><rect x="45" y="5" width="9" height="7" rx="0.800" fill="#f6f6f6"/><rect x="47" y="7" width="5" height="3" fill="#3c4254"/><rect x="48" y="8" width="3" height="1" fill="#8fa3c4"/><path d="M79.500 5 L87.500 12 M87.500 5 L79.500 12" stroke="#3c4254" stroke-width="4.600" fill="none"/><path d="M79.500 5 L87.500 12 M87.500 5 L79.500 12" stroke="#f6f6f6" stroke-width="2.800" fill="none"/></svg><div class="a" style="left:10px;top:662px;width:1900px;height:475px;background:#fff;border:1px solid;border-color:#a0a0a0 #fff #fff #a0a0a0;"></div><div class="a" style="left:11px;top:663px;width:1898px;height:473px;border:1px solid;border-color:#696969 #e3e3e3 #e3e3e3 #696969;"></div><svg style="left:0;top:0" width="1920" height="1200" viewBox="0 0 1920 1200" shape-rendering="crispEdges"><path d="M78 735.5 H1864 M78 774.5 H1864 M78 813.5 H1864 M78 852.5 H1864 M78 891.5 H1864 M78 930.5 H1864 M78 969.5 H1864 M78 1008.5 H1864 M78 1047.5 H1864 M213.5 696 V1087 M292.5 696 V1087 M348.5 696 V1087 M391.5 696 V1087 M427.5 696 V1087 M457.5 696 V1087 M483.5 696 V1087 M506.5 696 V1087 M526.5 696 V1087 M661.5 696 V1087 M740.5 696 V1087 M796.5 696 V1087 M840.5 696 V1087 M875.5 696 V1087 M905.5 696 V1087 M931.5 696 V1087 M954.5 696 V1087 M975.5 696 V1087 M1110.5 696 V1087 M1189.5 696 V1087 M1245.5 696 V1087 M1289.5 696 V1087 M1324.5 696 V1087 M1354.5 696 V1087 M1380.5 696 V1087 M1403.5 696 V1087 M1424.5 696 V1087 M1559.5 696 V1087 M1638.5 696 V1087 M1694.5 696 V1087 M1737.5 696 V1087 M1773.5 696 V1087 M1803.5 696 V1087 M1829.5 696 V1087 M1852.5 696 V1087" stroke="#000" stroke-width="1" stroke-dasharray="3 3" fill="none"/><polyline points="78,812.0 1740,812.0 1742,812.1 1744,812.1 1746,812.2 1748,812.2 1750,812.3 1752,812.4 1754,812.4 1756,812.5 1758,812.5 1760,812.6 1762,812.7 1764,812.7 1766,812.8 1768,812.9 1770,812.9 1772,813.0 1774,813.1 1776,813.1 1778,813.2 1780,813.3 1782,813.4 1784,813.4 1786,813.5 1788,813.6 1790,813.8 1792,813.9 1794,814.1 1796,814.2 1798,814.4 1800,814.5 1802,814.7 1804,814.9 1806,815.1 1808,815.3 1810,815.5 1812,815.7 1814,815.9 1816,816.2 1818,816.5 1820,816.8 1822,817.1 1824,817.4 1826,817.7 1828,818.0 1830,818.3 1832,818.8 1834,819.3 1836,819.8 1838,820.3 1840,820.8 1842,821.3 1844,822.0 1846,822.6 1848,823.3 1850,823.9 1852,824.6 1854,825.4 1856,826.3 1858,827.2 1860,828.0 1862,828.9 1864,829.8" fill="none" stroke="#0000ff" stroke-width="2" shape-rendering="crispEdges"/><rect x="78.5" y="696.5" width="1786" height="391" fill="none" stroke="#000" stroke-width="1"/></svg><svg style="left:1845px;top:700px" width="18" height="11" viewBox="0 0 18 11"><text x="-0.500" y="11" font-family="Liberation Sans,sans-serif" font-weight="bold" font-size="16.400" fill="#ff00ff" textLength="18.500" lengthAdjust="spacingAndGlyphs">MI</text><path d="M0 -0.500 H19 M0 1.500 H19 M0 3.500 H19 M0 5.500 H19" stroke="#fff" stroke-width="1" shape-rendering="crispEdges"/></svg><span class="t " style="left:26.50px;top:665.15px;font-size:14px;line-height:14px;color:#0000ff;letter-spacing:0.761px;font-weight:bold;">A(dBV)</span><span class="t " style="left:59.93px;top:689.15px;font-size:14px;line-height:14px;color:#0000ff;font-weight:bold;">20</span><span class="t " style="left:67.71px;top:728.15px;font-size:14px;line-height:14px;color:#0000ff;font-weight:bold;">0</span><span class="t " style="left:55.27px;top:767.15px;font-size:14px;line-height:14px;color:#0000ff;font-weight:bold;">-20</span><span class="t " style="left:55.27px;top:806.15px;font-size:14px;line-height:14px;color:#0000ff;font-weight:bold;">-40</span><span class="t " style="left:55.27px;top:845.15px;font-size:14px;line-height:14px;color:#0000ff;font-weight:bold;">-60</span><span class="t " style="left:55.27px;top:884.15px;font-size:14px;line-height:14px;color:#0000ff;font-weight:bold;">-80</span><span class="t " style="left:47.48px;top:923.15px;font-size:14px;line-height:14px;color:#0000ff;font-weight:bold;">-100</span><span class="t " style="left:47.48px;top:962.15px;font-size:14px;line-height:14px;color:#0000ff;font-weight:bold;">-120</span><span class="t " style="left:47.48px;top:1001.15px;font-size:14px;line-height:14px;color:#0000ff;font-weight:bold;">-140</span><span class="t " style="left:47.48px;top:1040.15px;font-size:14px;line-height:14px;color:#0000ff;font-weight:bold;">-160</span><span class="t " style="left:47.48px;top:1080.15px;font-size:14px;line-height:14px;color:#0000ff;font-weight:bold;">-180</span><span class="t " style="left:680.50px;top:665.15px;font-size:14px;line-height:14px;color:#0000ff;letter-spacing:0.488px;font-weight:bold;">A: Peak Frequency=</span><span class="t " style="left:858.00px;top:665.15px;font-size:14px;line-height:14px;color:#0000ff;letter-spacing:0.294px;font-weight:bold;">76.18</span><span class="t " style="left:913.00px;top:665.15px;font-size:14px;line-height:14px;color:#0000ff;letter-spacing:1.445px;font-weight:bold;">Hz</span><span class="t " style="left:940.30px;top:665.15px;font-size:14px;line-height:14px;color:#0000ff;letter-spacing:0.628px;font-weight:bold;">Bandwidth=</span><span class="t " style="left:1068.50px;top:665.15px;font-size:14px;line-height:14px;color:#0000ff;letter-spacing:0.439px;font-weight:bold;">0.00</span><span class="t " style="left:1116.30px;top:665.15px;font-size:14px;line-height:14px;color:#0000ff;letter-spacing:0.956px;font-weight:bold;">Hz ~</span><span class="t " style="left:1164.00px;top:665.15px;font-size:14px;line-height:14px;color:#0000ff;letter-spacing:0.327px;font-weight:bold;">77.63086</span><span class="t " style="left:1235.30px;top:665.15px;font-size:14px;line-height:14px;color:#0000ff;letter-spacing:0.868px;font-weight:bold;">kHz</span><span class="t " style="left:70.81px;top:1092.15px;font-size:14px;line-height:14px;color:#008040;font-weight:bold;">10</span><span class="t " style="left:205.81px;top:1092.15px;font-size:14px;line-height:14px;color:#008040;font-weight:bold;">20</span><span class="t " style="left:383.81px;top:1092.15px;font-size:14px;line-height:14px;color:#008040;font-weight:bold;">50</span><span class="t " style="left:514.92px;top:1092.15px;font-size:14px;line-height:14px;color:#008040;font-weight:bold;">100</span><span class="t " style="left:649.92px;top:1092.15px;font-size:14px;line-height:14px;color:#008040;font-weight:bold;">200</span><span class="t " style="left:828.92px;top:1092.15px;font-size:14px;line-height:14px;color:#008040;font-weight:bold;">500</span><span class="t " style="left:967.81px;top:1092.15px;font-size:14px;line-height:14px;color:#008040;font-weight:bold;">1k</span><span class="t " style="left:1102.81px;top:1092.15px;font-size:14px;line-height:14px;color:#008040;font-weight:bold;">2k</span><span class="t " style="left:1281.81px;top:1092.15px;font-size:14px;line-height:14px;color:#008040;font-weight:bold;">5k</span><span class="t " style="left:1412.92px;top:1092.15px;font-size:14px;line-height:14px;color:#008040;font-weight:bold;">10k</span><span class="t " style="left:1547.92px;top:1092.15px;font-size:14px;line-height:14px;color:#008040;font-weight:bold;">20k</span><span class="t " style="left:1725.92px;top:1092.15px;font-size:14px;line-height:14px;color:#008040;font-weight:bold;">50k</span><span class="t " style="left:14.00px;top:1106.15px;font-size:14px;line-height:14px;color:#008040;letter-spacing:0.472px;font-weight:bold;">FFT Segments:5</span><span class="t " style="left:141.30px;top:1106.15px;font-size:14px;line-height:14px;color:#008040;letter-spacing:0.377px;font-weight:bold;">Resolution: 5.85938Hz</span><span class="t " style="left:812.70px;top:1106.15px;font-size:14px;line-height:14px;color:#008040;letter-spacing:0.658px;font-weight:bold;">AMPLITUDE SPECTRUM in dBV (Vr=1 Vrms)</span><span class="t " style="left:634.50px;top:1121.15px;font-size:14px;line-height:14px;color:#008040;letter-spacing:0.403px;font-weight:bold;">Sweep = 20Hz - 96KHz, Sweep Time = 100ms, Smooth = Linear 1024 points, Peak Hold = Forever</span><span class="t " style="left:1657.30px;top:1106.15px;font-size:14px;line-height:14px;color:#008040;letter-spacing:0.363px;font-weight:bold;">Peak Held Frames: 51</span><span class="t " style="left:1872.30px;top:1104.15px;font-size:14px;line-height:14px;color:#008040;letter-spacing:1.195px;font-weight:bold;">Hz</span><div class="a" style="left:0px;top:1145px;width:1920px;height:25px;background:#f0f0f0;border-top:2px solid #fff;border-bottom:1px solid #fff;"></div><div class="a" style="left:0px;top:1168px;width:1920px;height:1px;background:#a0a0a0;"></div><div class="grip" style="left:0;top:1147px;height:21px"></div><span class="t " style="left:18.30px;top:1150.73px;font-size:14.5px;line-height:14.5px;color:#000;font-weight:bold;">F</span><div class="cb" style="left:30px;top:1147px;width:152px;height:21px;background:#fff;"><i></i><div class="ab" style="right:0;top:1px;width:17px;height:19px;"><b></b></div></div><span class="t " style="left:33.50px;top:1151.73px;font-size:14.5px;line-height:14.5px;color:#000;transform:scaleX(0.8633);transform-origin:0 0;font-weight:bold;">Auto</span><div class="cb" style="left:183px;top:1147px;width:120px;height:21px;background:#fff;"><i></i><div class="ab" style="right:0;top:1px;width:17px;height:19px;"><b></b></div></div><span class="t " style="left:187.00px;top:1151.73px;font-size:14.5px;line-height:14.5px;color:#000;transform:scaleX(0.8684);transform-origin:0 0;font-weight:bold;">I1</span><span class="t " style="left:309.00px;top:1150.73px;font-size:14.5px;line-height:14.5px;color:#0000ff;font-weight:bold;">A</span><div class="cb" style="left:324px;top:1147px;width:153px;height:21px;background:#fff;"><i></i><div class="ab" style="right:0;top:1px;width:17px;height:19px;"><b></b></div></div><span class="t " style="left:328.00px;top:1151.73px;font-size:14.5px;line-height:14.5px;color:#0000ff;transform:scaleX(0.9594);transform-origin:0 0;font-weight:bold;">&lt;200dB&gt;</span><div class="cb" style="left:478px;top:1147px;width:112px;height:21px;background:#fff;"><i></i><div class="ab" style="right:0;top:1px;width:17px;height:19px;"><b></b></div></div><span class="t " style="left:483.00px;top:1151.73px;font-size:14.5px;line-height:14.5px;color:#0000ff;transform:scaleX(0.9076);transform-origin:0 0;font-weight:bold;">Off</span><span class="t " style="left:597.00px;top:1150.73px;font-size:14.5px;line-height:14.5px;color:#000;font-weight:bold;">M</span><div class="cb" style="left:615px;top:1147px;width:306px;height:21px;background:#fff;"><i></i><div class="ab" style="right:0;top:1px;width:17px;height:19px;"><b></b></div></div><span class="t " style="left:618.00px;top:1151.73px;font-size:14.5px;line-height:14.5px;color:#000;transform:scaleX(0.9204);transform-origin:0 0;font-weight:bold;">Amplitude Spectrum</span><span class="t " style="left:928.50px;top:1150.73px;font-size:14.5px;line-height:14.5px;color:#ff0000;font-weight:bold;">B</span><div class="cb" style="left:945px;top:1147px;width:152px;height:21px;background:#fff;"><i></i><div class="ab" style="right:0;top:1px;width:17px;height:19px;"><b></b></div></div><span class="t " style="left:947.70px;top:1151.73px;font-size:14.5px;line-height:14.5px;color:#ff0000;transform:scaleX(0.9076);transform-origin:0 0;font-weight:bold;">Off</span><div class="cb" style="left:1099px;top:1147px;width:111px;height:21px;background:#fff;"><i></i><div class="ab" style="right:0;top:1px;width:17px;height:19px;"><b></b></div></div><span class="t " style="left:1102.70px;top:1151.73px;font-size:14.5px;line-height:14.5px;color:#ff0000;transform:scaleX(0.9076);transform-origin:0 0;font-weight:bold;">Off</span><span class="t " style="left:1220.50px;top:1150.73px;font-size:14.5px;line-height:14.5px;color:#000;transform:scaleX(0.9221);transform-origin:0 0;font-weight:bold;">FFT</span><div class="cb" style="left:1256px;top:1147px;width:158px;height:21px;background:#fff;"><i></i><div class="ab" style="right:0;top:1px;width:17px;height:19px;"><b></b></div></div><span class="t " style="left:1260.00px;top:1151.73px;font-size:14.5px;line-height:14.5px;color:#000;transform:scaleX(1.0169);transform-origin:0 0;font-weight:bold;">32768</span><span class="t " style="left:1433.50px;top:1150.73px;font-size:14.5px;line-height:14.5px;color:#000;transform:scaleX(0.9962);transform-origin:0 0;font-weight:bold;">WND</span><div class="cb" style="left:1488px;top:1147px;width:272px;height:21px;background:#fff;"><i></i><div class="ab" style="right:0;top:1px;width:17px;height:19px;"><b></b></div></div><span class="t " style="left:1491.70px;top:1151.73px;font-size:14.5px;line-height:14.5px;color:#000;transform:scaleX(0.9452);transform-origin:0 0;font-weight:bold;">Rectangle</span><div class="cb" style="left:1761px;top:1147px;width:157px;height:21px;background:#fff;"><i></i><div class="ab" style="right:0;top:1px;width:17px;height:19px;"><b></b></div></div><span class="t " style="left:1765.00px;top:1151.73px;font-size:14.5px;line-height:14.5px;color:#000;transform:scaleX(0.9543);transform-origin:0 0;font-weight:bold;">0%</span><div class="a" style="left:0px;top:1170px;width:1920px;height:30px;background:linear-gradient(90deg,#263b45 0,#22353f 30%,#1e2f3b 60%,#1b2a42 85%,#1a2846 100%);"></div><div class="a" style="left:556px;top:1170px;width:36px;height:30px;background:#45565f;"></div><div class="a" style="left:1915px;top:1170px;width:1px;height:30px;background:#56626e;"></div><div class="a" style="left:264px;top:1198px;width:28px;height:2px;background:#76a9d8;"></div><div class="a" style="left:556px;top:1198px;width:36px;height:2px;background:#76a9d8;"></div><svg style="left:0;top:1170px" width="1920" height="30" viewBox="0 0 1920 30"><path d="M10 9.300 L16.700 8.300 V14.700 H10Z M17.700 8.200 L26 7 V14.700 H17.700Z M10 15.700 H16.700 V22 L10 21Z M17.700 15.700 H26 V23.300 L17.700 22.100Z" fill="#fff"/><circle cx="56" cy="13" r="5.500" fill="none" stroke="#fff" stroke-width="1.500"/><path d="M52.300 17 L46.300 23" stroke="#fff" stroke-width="1.700"/><path d="M85 9.500 Q85 8.500 86 8.500 H90.500 L92 10 H100 Q101 10 101 11 V21.500 H85Z" fill="#f4b932"/><path d="M85 12 H101 V21.500 H85Z" fill="#ffd866"/><path d="M88.500 21.500 V16.500 H97.500 V21.500 H95.500 V19 H90.500 V21.500Z" fill="#2f8ee0"/><path d="M122.500 10 L126 7.500 H136 L137.500 9.500 V21 L136 22.500 H123.500 L122.500 21Z" fill="#f4f4f4" stroke="#000" stroke-width="1.200"/><path d="M126 9 V20 M130.500 8 V13 L133 19.500 M134.500 8.500 V21" stroke="#000" stroke-width="1.400" fill="none"/><path d="M130 13 L132.500 19" stroke="#d00000" stroke-width="1.200"/><rect x="161" y="7" width="12" height="16" rx="1" fill="#7a8794"/><rect x="162.500" y="8.500" width="9" height="3" fill="#49c8f2"/><g fill="#d8dde2"><rect x="162.500" y="13" width="2" height="2"/><rect x="166" y="13" width="2" height="2"/><rect x="169.500" y="13" width="2" height="2"/><rect x="162.500" y="16.500" width="2" height="2"/><rect x="166" y="16.500" width="2" height="2"/><rect x="162.500" y="20" width="2" height="2"/><rect x="166" y="20" width="2" height="2"/></g><rect x="169.500" y="16.500" width="2" height="5.500" fill="#1f5fa8"/><rect x="198" y="7" width="12" height="16" fill="#f00000"/><ellipse cx="204" cy="15" rx="4.800" ry="7" fill="#fff"/><path d="M205.500 9.500 L203 14 L205 15.500 L202.500 20.500" stroke="#444" stroke-width="1" fill="none"/><rect x="233" y="8" width="15.500" height="13.500" rx="2" fill="#000" stroke="#e8e8e8" stroke-width="0.800"/><rect x="235" y="10" width="11.500" height="9" fill="#0a5a1a"/><path d="M235 16 H237.500 L239 12 H241.500 L243 16 H246.500 M235 18.500 H246.500" stroke="#3cff5a" stroke-width="1" fill="none"/><path d="M270.500 14.500 Q278 8.500 285.500 14.500 Q278 22 270.500 14.500Z" fill="#e8a21c"/><circle cx="278.500" cy="15" r="3" fill="#c03030"/><circle cx="278.500" cy="15" r="1.300" fill="#7a3a3a"/><g fill="#f0b428"><circle cx="271.500" cy="10" r="1.200"/><circle cx="275" cy="8" r="1.200"/><circle cx="279" cy="7.500" r="1.200"/><circle cx="283" cy="8.500" r="1.200"/><circle cx="286" cy="11" r="1.200"/></g><path d="M318.500 7.500 L309.500 11.500 V19 L315 23 L321 19.500 V14.500 H315.500 L317.500 17 V18 L315 19.500 L313 18 V13 L320.500 9.500Z" fill="#2db6cf"/><rect x="345" y="7.500" width="11.500" height="10" fill="#5d8fc6" stroke="#9ab8dc" stroke-width="0.800"/><path d="M346.500 10 H355 M346.500 12.500 H353 M346.500 15 H354" stroke="#d9e6f5" stroke-width="1"/><rect x="349" y="16.500" width="10.500" height="5.500" fill="#5a8c50" stroke="#8fbf86" stroke-width="0.700"/><path d="M347 22 h5" stroke="#9ab" stroke-width="1.200"/><rect x="381.500" y="7.500" width="15" height="15" rx="3" fill="#2a2a30"/><path d="M385 10.500 H394 L389.500 20" stroke="#d8222a" stroke-width="2.400" fill="none"/><text x="382.500" y="19.500" font-family="Liberation Sans,sans-serif" font-size="6" font-weight="bold" fill="#c8c8c8">FC</text><path d="M430.500 7 L434 8.700 V21.300 L430.500 23 L421.500 15 Z M430.500 11.300 L425.700 15 L430.500 18.700Z" fill="#2aa0f0" fill-rule="evenodd"/><path d="M418.500 12 L420 10.800 L425.500 15 L420 19.200 L418.500 18 L422 15Z" fill="#1c78c0"/><svg x="455" y="7" width="16" height="16" viewBox="0 0 16 16" style="overflow:hidden"><rect width="16" height="16" fill="#0000ff"/><path d="M-1 8 L0.500 6 C2 4.200 3 3.300 4 3.300 C5.500 3.300 6.500 5 8 7.500 C9.500 10 10.500 11.400 11.500 11.400 C13 11.400 14.500 9.500 17 7 V17 H-1Z" fill="#ff0000" stroke="#fff" stroke-width="1.300"/></svg><svg x="566" y="7" width="16" height="16" viewBox="0 0 16 16" style="overflow:hidden"><rect width="16" height="16" fill="#0000ff"/><path d="M-1 8 L0.500 6 C2 4.200 3 3.300 4 3.300 C5.500 3.300 6.500 5 8 7.500 C9.500 10 10.500 11.400 11.500 11.400 C13 11.400 14.500 9.500 17 7 V17 H-1Z" fill="#ff0000" stroke="#fff" stroke-width="1.300"/></svg><circle cx="500" cy="15" r="7.500" fill="#e33b2e"/><path d="M500 15 L493.600 11.200 A7.500 7.500 0 0 0 499 22.400Z" fill="#2ba24c"/><path d="M500 15 L499 22.400 A7.500 7.500 0 0 0 506.900 12 Z" fill="#fbc116"/><circle cx="500" cy="15" r="3.400" fill="#fff"/><circle cx="500" cy="15" r="2.600" fill="#4a8af4"/><rect x="528.500" y="7.500" width="12" height="13" rx="3" fill="#f6e3c3" stroke="#e8a552" stroke-width="1.200"/><circle cx="538" cy="17" r="5.300" fill="#f3cf7a" stroke="#d59a3a" stroke-width="1"/><path d="M535.500 15.500 L538 18 L541 15" stroke="#8a5a10" stroke-width="1.200" fill="none"/><path d="M1660.500 17.500 L1666 12 L1671.500 17.500" stroke="#fff" stroke-width="1.300" fill="none"/><rect x="1682" y="8.500" width="14" height="6.500" fill="#22b8c8"/><path d="M1683 10 h12 M1683 12 h12 M1683 14 h12" stroke="#0a6a78" stroke-width="0.700" stroke-dasharray="1 1"/><rect x="1690" y="12" width="6.500" height="10" rx="3" fill="#e8e8e8" stroke="#777" stroke-width="0.800"/><path d="M1693.200 12 v4" stroke="#c02020" stroke-width="1.200"/><rect x="1707" y="9" width="14.500" height="13" fill="#141414"/><path d="M1707 9 H1721.500 V11 L1707 14Z" fill="#3a3a3a"/><path d="M1709.500 20 L1715.500 11 H1718 L1713 20Z M1715 20 L1719 13.500 V20Z" fill="#fff"/><path d="M1733.500 11.500 H1745.500 V20 H1733.500 M1740 20 V23 M1735.500 23 H1745" stroke="#fff" stroke-width="1.200" fill="none"/><rect x="1730.500" y="12" width="4" height="3.600" fill="#1b2a42" stroke="#fff" stroke-width="1.100"/><path d="M1732.500 15.600 V23" stroke="#fff" stroke-width="1.100"/><path d="M1754.500 12.500 H1757 L1760.500 9 V21 L1757 17.500 H1754.500Z" fill="none" stroke="#fff" stroke-width="1.100"/><path d="M1763 12.500 Q1765 15 1763 17.500 M1765.500 10.500 Q1768.500 15 1765.500 19.500" stroke="#fff" stroke-width="1" fill="none"/><path d="M1768 8.500 Q1772 15 1768 21.500" stroke="#6a7686" stroke-width="1" fill="none"/><path d="M1879.500 8 H1895 V20 H1889.500 L1887 22.500 L1884.500 20 H1879.500Z" stroke="#fff" stroke-width="1.200" fill="none"/></svg><span class="t " style="left:1779.50px;top:1179.24px;font-size:12px;line-height:12px;color:#fff;letter-spacing:-0.835px;">ENG</span><span class="t " style="left:1818.50px;top:1179.24px;font-size:12px;line-height:12px;color:#fff;letter-spacing:-0.197px;">9:29 πμ</span></body></html>
